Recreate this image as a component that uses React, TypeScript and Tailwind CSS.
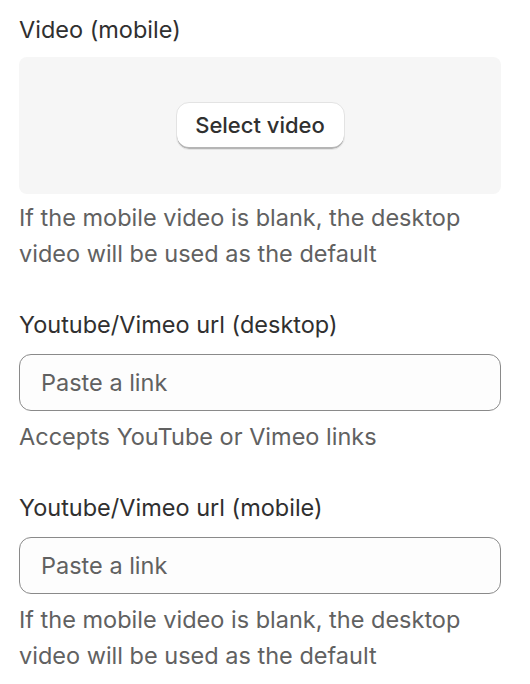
const font = { fontFamily: 'Inter, "Noto Sans", sans-serif' };

const Help = ({ children, className = "mt-[6px]" }: { children: React.ReactNode; className?: string }) => (
  <p className={`${className} text-[23.5px] leading-[36px] text-[#616161]`}>{children}</p>
);

const LinkField = ({ label, help }: { label: string; help: string }) => (
  <div className="mt-[35px]">
    <label className="block text-[23.5px] leading-[36px] text-[#303030]">{label}</label>
    <input
      type="text"
      placeholder="Paste a link"
      className="mt-[11px] block h-[57px] w-full rounded-[12px] border border-[#8a8a8a] bg-[#fdfdfd] px-[21px] text-[23.5px] text-[#303030] placeholder:text-[#616161] outline-none"
    />
    <Help className="mt-[8px]">{help}</Help>
  </div>
);

export default function App() {
  return (
    <div className="min-h-screen bg-white pl-[19px] pr-[29px] pt-[12px]" style={font}>
      <div>
        <div className="text-[23.5px] leading-[36px] text-[#303030]">Video (mobile)</div>
        <div className="mt-[9px] flex h-[137px] items-center justify-center rounded-[8px] bg-[#f6f6f6]">
          <button className="h-[48px] w-[169px] rounded-[13px] border border-[#e3e3e3] bg-white text-[22px] font-medium text-[#303030] shadow-[inset_0_-2px_0_#b5b5b5]">
            Select video
          </button>
        </div>
        <Help>If the mobile video is blank, the desktop video will be used as the default</Help>
      </div>
      <LinkField label="Youtube/Vimeo url (desktop)" help="Accepts YouTube or Vimeo links" />
      <LinkField
        label="Youtube/Vimeo url (mobile)"
        help="If the mobile video is blank, the desktop video will be used as the default"
      />
    </div>
  );
}
